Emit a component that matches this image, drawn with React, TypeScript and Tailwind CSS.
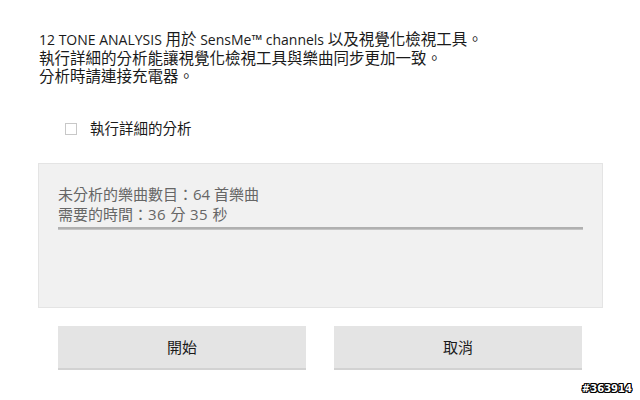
import React from "react";

const L = ({ children }: { children: React.ReactNode }) => (
  <span className="text-[14px]">{children}</span>
);

export default function App() {
  return (
    <div
      className="w-[640px] h-[400px] bg-white relative overflow-hidden text-[#222]"
      style={{ fontFamily: '"Open Sans", "Noto Sans CJK TC", sans-serif' }}
    >
      <div className="pt-[30px] pl-[39px] text-[15.5px] leading-[18px] text-[#1a1a1a]">
        <p>
          <L>12 TONE ANALYSIS </L>用於<L> SensMe™ channels </L>以及視覺化檢視工具。
        </p>
        <p>執行詳細的分析能讓視覺化檢視工具與樂曲同步更加一致。</p>
        <p>分析時請連接充電器。</p>
      </div>

      <div className="mt-[32px] ml-[65px] flex items-center h-[24px]">
        <div className="w-[12px] h-[12px] border border-[#c8c8c8] bg-white" />
        <span className="ml-[13px] text-[14.5px] text-[#1a1a1a]">執行詳細的分析</span>
      </div>

      <div className="mt-[22px] ml-[38px] w-[565px] h-[145px] bg-[#f1f1f1] border border-[#e4e4e4] pt-[20px] px-[19px]">
        <div className="text-[15px] leading-[20px] text-[#666]">
          <p>未分析的樂曲數目：64 首樂曲</p>
          <p>
            需要的時間：<span className="tracking-[0.5px]">36 </span>分
            <span className="tracking-[0.5px]"> 35 </span>秒
          </p>
        </div>
        <div className="mt-[3px] w-[525px] h-[3px] bg-[#b0b0b0] border-b border-[#c4c4c4]" />
      </div>

      <div className="mt-[18px] ml-[58px] flex gap-[28px]">
        <button className="w-[248px] h-[44px] bg-[#e4e4e4] border-b-2 border-[#d2d2d2] text-[15px] text-[#1a1a1a]">
          開始
        </button>
        <button className="w-[248px] h-[44px] bg-[#e4e4e4] border-b-2 border-[#d2d2d2] text-[15px] text-[#1a1a1a]">
          取消
        </button>
      </div>

      <div
        className="absolute right-[8px] bottom-[6px] text-[10px] font-bold text-white leading-none"
        style={{
          fontFamily: '"DejaVu Sans", sans-serif',
          textShadow:
            "1px 0 0 #000, -1px 0 0 #000, 0 1px 0 #000, 0 -1px 0 #000, 1px 1px 0 #000, -1px -1px 0 #000, 1px -1px 0 #000, -1px 1px 0 #000",
        }}
      >
        #363914
      </div>
    </div>
  );
}
